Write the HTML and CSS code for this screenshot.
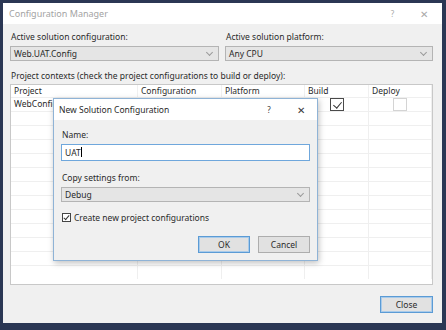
FILE: index.html
```html
<!DOCTYPE html>
<html lang="en">
<head>
    <meta charset="UTF-8">
    <title>Configuration Manager</title>
    <link rel="stylesheet" href="styles.css">
</head>
<body>

    <div class="window">
        <!-- Title bar -->
        <div class="titlebar">
            <span class="title">Configuration Manager</span>
            <span class="tb-help">?</span>
            <span class="tb-close">&#x2715;</span>
        </div>

        <div class="content">
            <!-- Solution configuration / platform -->
            <div class="solution-row">
                <div class="field">
                    <label>Active solution configuration:</label>
                    <div class="combo"><span>Web.UAT.Config</span><span class="arrow"></span></div>
                </div>
                <div class="field">
                    <label>Active solution platform:</label>
                    <div class="combo"><span>Any CPU</span><span class="arrow"></span></div>
                </div>
            </div>

            <div class="contexts-label">Project contexts (check the project configurations to build or deploy):</div>

            <!-- Project grid -->
            <div class="grid">
                <div class="grid-head">
                    <div class="cell">Project</div>
                    <div class="cell">Configuration</div>
                    <div class="cell">Platform</div>
                    <div class="cell">Build</div>
                    <div class="cell">Deploy</div>
                </div>
                <div class="grid-row">
                    <div class="cell">WebConfig</div>
                    <div class="cell"><span class="mini-drop"></span></div>
                    <div class="cell"><span class="mini-drop"></span></div>
                    <div class="cell center"><span class="check checked"></span></div>
                    <div class="cell center"><span class="check disabled"></span></div>
                </div>
                <div class="grid-row"><div class="cell"></div><div class="cell"></div><div class="cell"></div><div class="cell"></div><div class="cell"></div></div>
                <div class="grid-row"><div class="cell"></div><div class="cell"></div><div class="cell"></div><div class="cell"></div><div class="cell"></div></div>
                <div class="grid-row"><div class="cell"></div><div class="cell"></div><div class="cell"></div><div class="cell"></div><div class="cell"></div></div>
                <div class="grid-row"><div class="cell"></div><div class="cell"></div><div class="cell"></div><div class="cell"></div><div class="cell"></div></div>
                <div class="grid-row"><div class="cell"></div><div class="cell"></div><div class="cell"></div><div class="cell"></div><div class="cell"></div></div>
                <div class="grid-row"><div class="cell"></div><div class="cell"></div><div class="cell"></div><div class="cell"></div><div class="cell"></div></div>
                <div class="grid-row"><div class="cell"></div><div class="cell"></div><div class="cell"></div><div class="cell"></div><div class="cell"></div></div>
                <div class="grid-row"><div class="cell"></div><div class="cell"></div><div class="cell"></div><div class="cell"></div><div class="cell"></div></div>
                <div class="grid-row"><div class="cell"></div><div class="cell"></div><div class="cell"></div><div class="cell"></div><div class="cell"></div></div>
                <div class="grid-row"><div class="cell"></div><div class="cell"></div><div class="cell"></div><div class="cell"></div><div class="cell"></div></div>
                <div class="grid-row"><div class="cell"></div><div class="cell"></div><div class="cell"></div><div class="cell"></div><div class="cell"></div></div>
                <div class="grid-row"><div class="cell"></div><div class="cell"></div><div class="cell"></div><div class="cell"></div><div class="cell"></div></div>
            </div>

            <div class="footer">
                <button class="btn default">Close</button>
            </div>
        </div>

        <!-- New Solution Configuration dialog -->
        <div class="dialog">
            <div class="titlebar dlg-titlebar">
                <span class="dlg-title">New Solution Configuration</span>
                <span class="tb-help dark">?</span>
                <span class="tb-close dark">&#x2715;</span>
            </div>
            <div class="dlg-body">
                <label>Name:</label>
                <div class="textbox">UAT<span class="caret"></span></div>

                <label class="gap-top">Copy settings from:</label>
                <div class="combo"><span>Debug</span><span class="arrow"></span></div>

                <div class="checkline">
                    <span class="check small checked"></span>
                    <span>Create new project configurations</span>
                </div>

                <div class="dlg-buttons">
                    <button class="btn default">OK</button>
                    <button class="btn">Cancel</button>
                </div>
            </div>
        </div>
    </div>

</body>
</html>
```

FILE: styles.css
```css
body {
    margin: 0;
    padding: 3px 4px 0 3px;
    width: 446px;
    height: 330px;
    box-sizing: border-box;
    background-color: #2b3754;
    font-family: "Noto Sans", "Open Sans", sans-serif;
    font-size: 8.5px;
    color: #2a2a2a;
    overflow: hidden;
}
.window {
    position: relative;
    width: 439px;
    height: 320px;
    background-color: #f0f0f0;
    display: flex;
    flex-direction: column;
}
.titlebar {
    height: 21px;
    background-color: #ffffff;
    display: flex;
    align-items: center;
    padding-left: 6px;
    flex-shrink: 0;
}
.title {
    flex: 1;
    color: #a3a3a3;
    font-size: 9px;
}
.tb-help {
    width: 31px;
    text-align: center;
    color: #a8a8a8;
    font-size: 8px;
}
.tb-close {
    width: 31px;
    margin-right: 3px;
    text-align: center;
    color: #a8a8a8;
    font-size: 10px;
}
.tb-help.dark, .tb-close.dark {
    color: #3a3a3a;
}
.content {
    flex: 1;
    display: flex;
    flex-direction: column;
    padding: 7px 9px 0 7px;
}
.solution-row {
    display: grid;
    grid-template-columns: 209px 208px;
    column-gap: 6px;
}
.field label, .dlg-body label {
    display: block;
    height: 12px;
    line-height: 12px;
    margin-left: 1px;
    margin-bottom: 3px;
}
.combo {
    height: 15px;
    background-color: #e5e5e5;
    border: 1px solid #b4b4b4;
    display: flex;
    align-items: center;
    padding-left: 3px;
    box-sizing: border-box;
}
.combo span:first-child {
    flex: 1;
}
.arrow {
    width: 4px;
    height: 4px;
    margin-right: 6px;
    margin-top: -3px;
    border-right: 1px solid #9a9a9a;
    border-bottom: 1px solid #9a9a9a;
    transform: rotate(45deg);
}
.contexts-label {
    margin-top: 9px;
    margin-left: 1px;
    height: 12px;
    line-height: 12px;
}
.grid {
    margin-top: 2px;
    height: 201px;
    background-color: #ffffff;
    border: 1px solid #c8c8c8;
    overflow: hidden;
    box-sizing: border-box;
}
.grid-head, .grid-row {
    display: grid;
    grid-template-columns: 127px 84px 83px 64px 1fr;
}
.grid-head .cell {
    height: 12px;
    line-height: 12px;
    padding-left: 3px;
    border-right: 1px solid #f0f0f0;
}
.grid-row .cell {
    position: relative;
    height: 14px;
    line-height: 12px;
    padding-left: 3px;
    border-right: 1px solid #efefef;
    border-top: 1px solid #efefef;
    box-sizing: border-box;
}
.cell.center {
    display: flex;
    justify-content: center;
    align-items: center;
    padding-left: 0;
}
.mini-drop {
    position: absolute;
    right: 5px;
    top: 1px;
    width: 10px;
    height: 12px;
    background-color: #c9c9c9;
}
.check {
    display: inline-block;
    width: 14px;
    height: 13px;
    border: 1px solid #4a4a4a;
    background-color: #ffffff;
    position: relative;
    box-sizing: border-box;
}
.check.disabled {
    border-color: #d4d4d4;
}
.check.checked::after {
    content: "";
    position: absolute;
    left: 4px;
    top: 1px;
    width: 4px;
    height: 7px;
    border-right: 1px solid #333333;
    border-bottom: 1px solid #333333;
    transform: rotate(40deg);
}
.check.small {
    width: 9px;
    height: 9px;
    border-color: #444444;
}
.check.small.checked::after {
    left: 2px;
    top: 0;
    width: 2px;
    height: 5px;
}
.footer {
    display: flex;
    justify-content: flex-end;
    padding-top: 11px;
}
.btn {
    font-family: inherit;
    font-size: 8.5px;
    color: #2a2a2a;
    width: 53px;
    height: 17px;
    padding: 0;
    background-color: #e1e1e1;
    border: 1px solid #adadad;
}
.btn.default {
    border-color: #5b9bd5;
    box-shadow: inset 0 0 0 1px #a9cbea;
}
.dialog {
    position: absolute;
    left: 50px;
    top: 95px;
    width: 265px;
    height: 163px;
    background-color: #f0f0f0;
    border: 1px solid #8fb3d6;
    box-sizing: border-box;
    box-shadow: 1px 2px 6px rgba(0, 0, 0, 0.25);
    display: flex;
    flex-direction: column;
}
.dlg-titlebar {
    height: 21px;
    padding-left: 5px;
}
.dlg-title {
    flex: 1;
    font-size: 8.5px;
}
.dlg-titlebar .tb-help {
    width: 40px;
}
.dlg-titlebar .tb-close {
    width: 24px;
    margin-right: 4px;
}
.dlg-body {
    padding: 9px 7px 0 7px;
    display: flex;
    flex-direction: column;
}
.textbox {
    height: 17px;
    background-color: #ffffff;
    border: 1px solid #6fa7dc;
    box-sizing: border-box;
    line-height: 15px;
    padding-left: 3px;
}
.caret {
    display: inline-block;
    width: 1px;
    height: 10px;
    background-color: #000000;
    vertical-align: -1px;
}
.gap-top {
    margin-top: 11px;
}
.checkline {
    display: flex;
    align-items: center;
    gap: 3px;
    margin-top: 10px;
    margin-left: 1px;
}
.dlg-buttons {
    display: flex;
    justify-content: flex-end;
    gap: 8px;
    margin-top: 13px;
}
.dlg-buttons .btn {
    width: 52px;
}
```
